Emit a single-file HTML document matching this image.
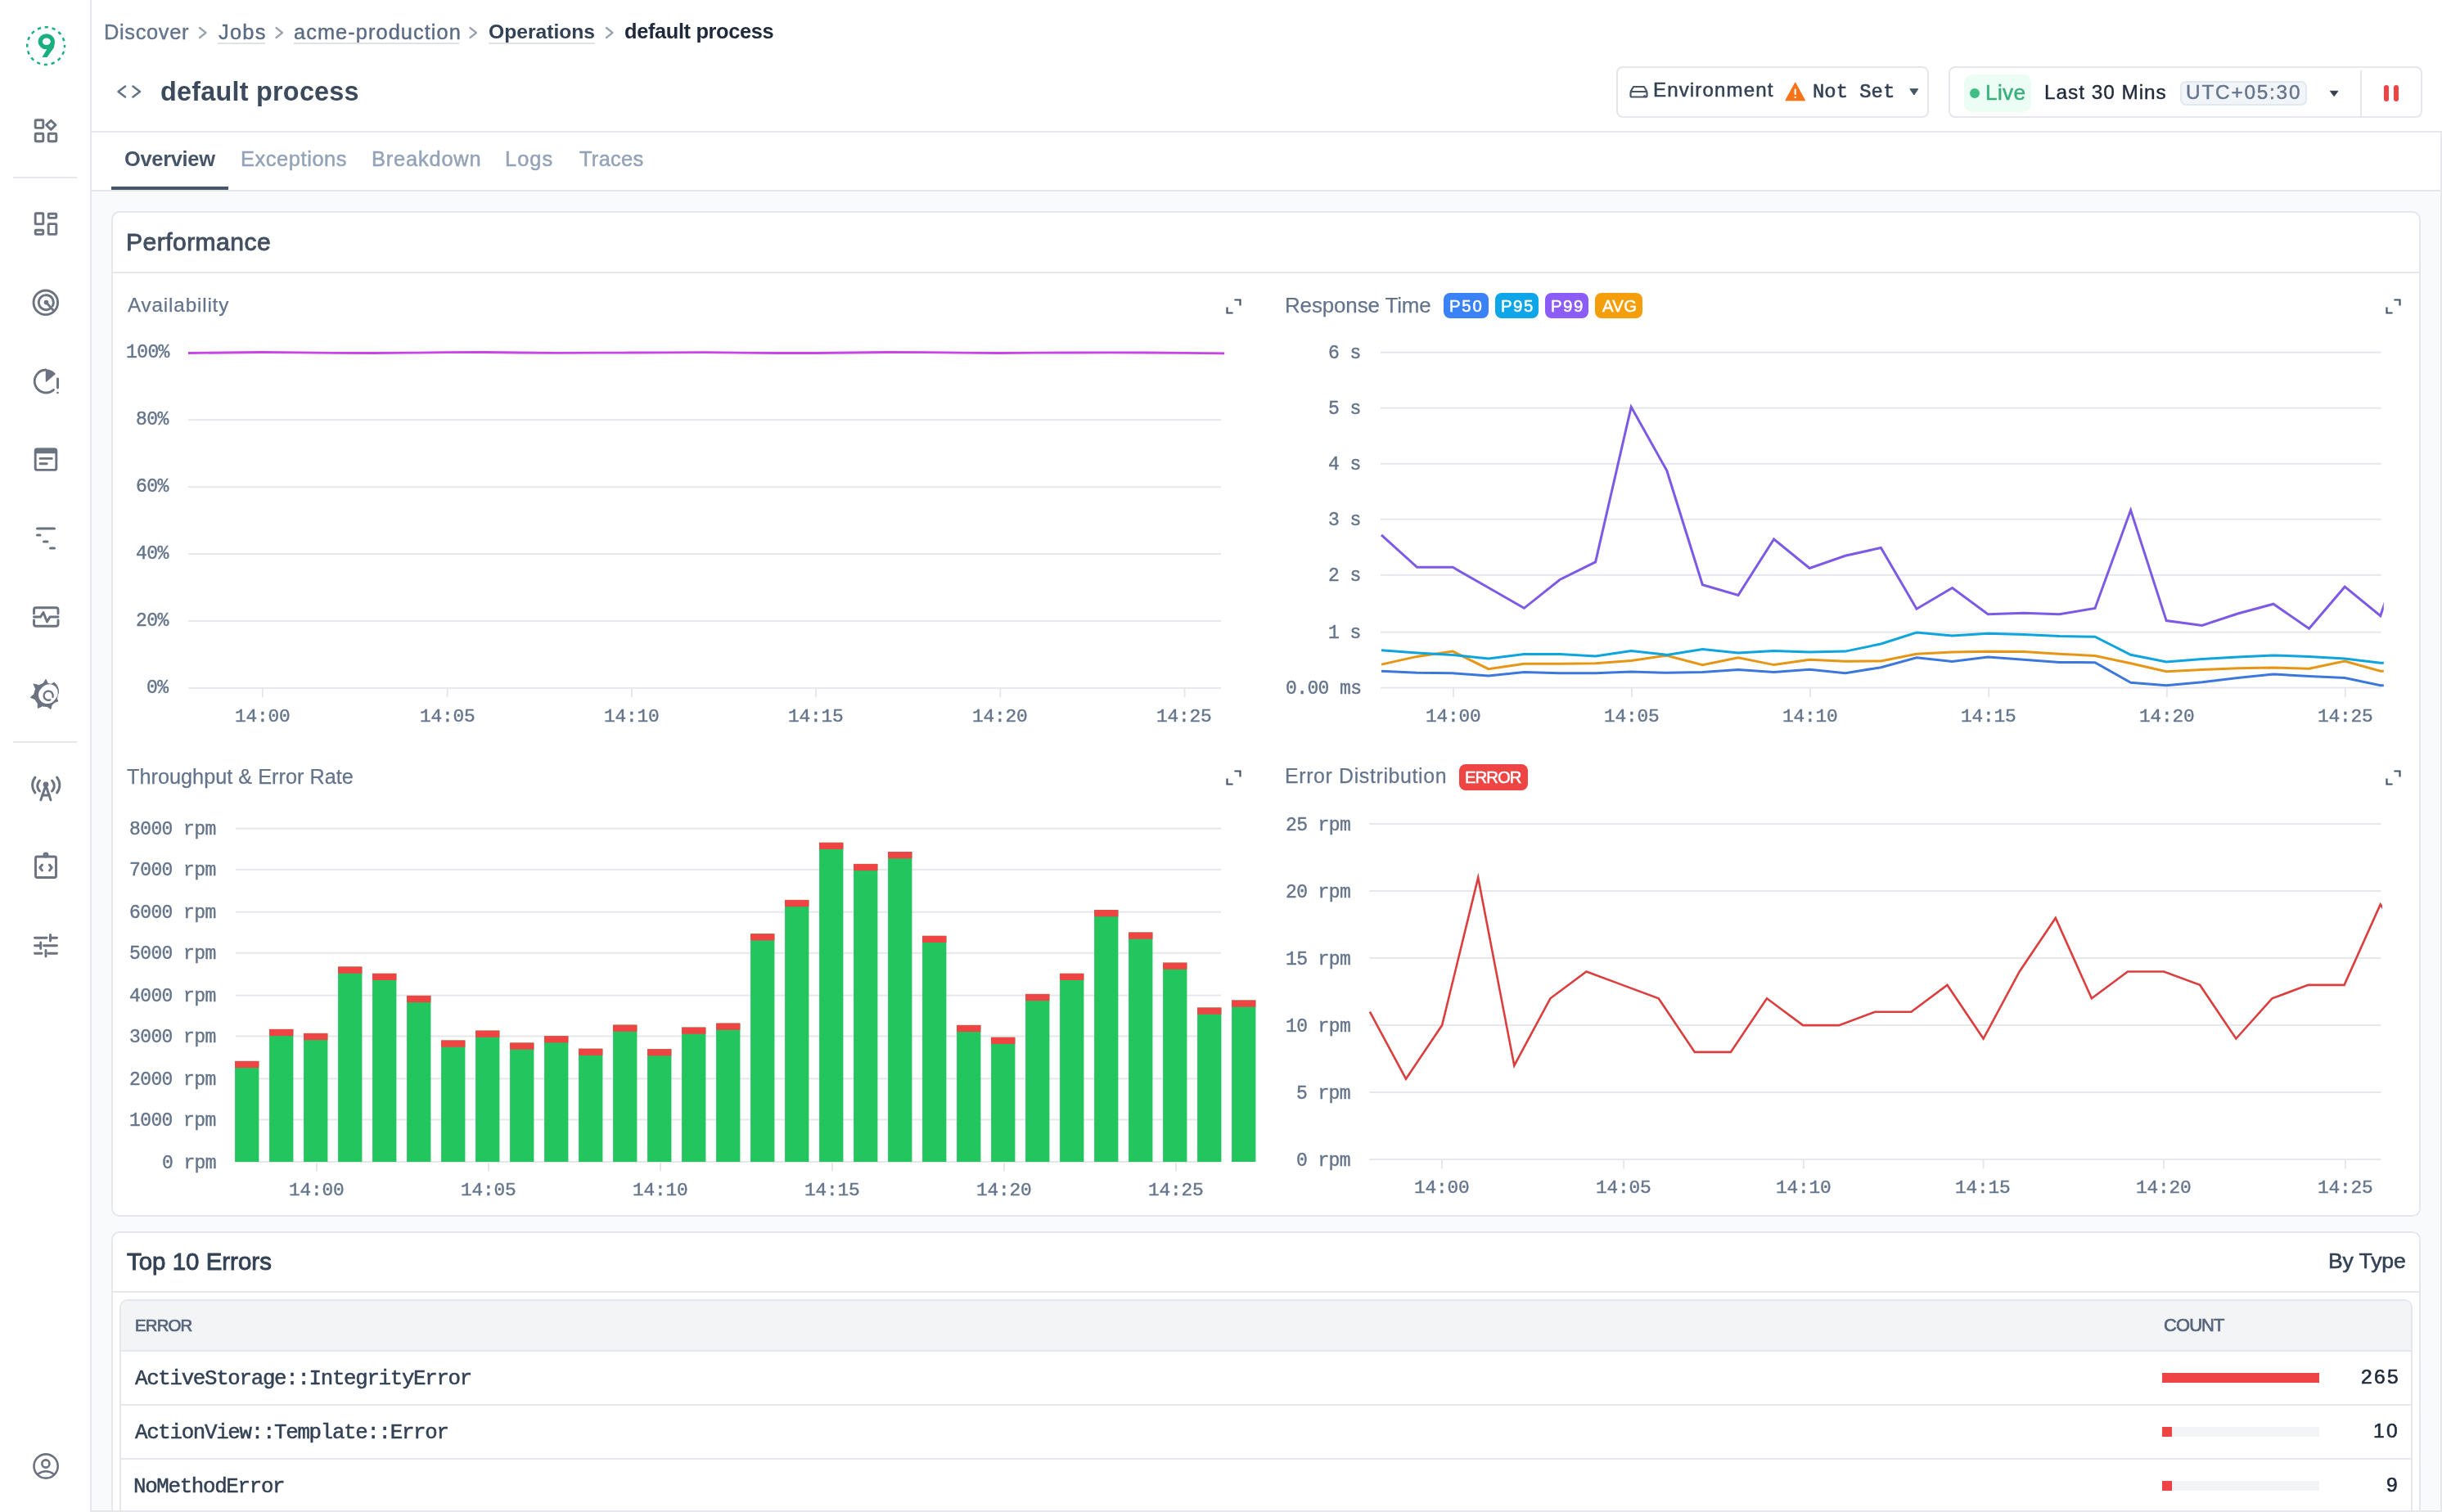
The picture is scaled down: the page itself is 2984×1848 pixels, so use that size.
<!DOCTYPE html>
<html><head><meta charset="utf-8"><title>default process</title>
<style>
*{box-sizing:border-box;margin:0;padding:0}
html,body{width:2984px;height:1848px;overflow:hidden;background:#fff;font-family:"Liberation Sans", sans-serif;}
body{position:relative}
.abs{position:absolute}
.t{position:absolute;white-space:pre;line-height:1;will-change:transform}
#sidebar{position:absolute;left:0;top:0;width:112px;height:1848px;background:#fff;border-right:2px solid #e5e7eb}
#panel{position:absolute;left:112px;top:160px;width:2872px;height:1688px;background:#f8fafc;border-top:2px solid #e5e7eb;border-right:2px solid #e5e7eb}
#tabs{position:absolute;left:112px;top:162px;width:2870px;height:72px;background:#fff;border-bottom:2px solid #e5e7eb}
.card{position:absolute;background:#fff;border:2px solid #e5e7eb;border-radius:10px}
</style></head>
<body>
<div id="sidebar"></div><svg class="abs" style="left:0;top:0" width="112" height="1848" viewBox="0 0 112 1848" fill="none" stroke-linecap="round" stroke-linejoin="round"><circle cx="56.1" cy="56.1" r="22.9" stroke="#1aaf7e" stroke-width="2.5" stroke-dasharray="4.2 4.79" stroke-dashoffset="2.1" stroke-linecap="butt"/><ellipse cx="56.8" cy="50.8" rx="7.6" ry="6.9" stroke="#1aaf7e" stroke-width="5.3"/><path d="M59.5 56.5 L66.8 52.5 L66 58 L57.6 70 L51.4 70 Z" fill="#1aaf7e"/><g stroke="#6b7280" stroke-width="2.9"><rect x="43.2" y="146.8" width="9.6" height="9.6" rx="1"/><rect x="43.2" y="163.2" width="9.6" height="9.6" rx="1"/><rect x="59.2" y="163.2" width="9.6" height="9.6" rx="1"/><path d="M62.3 147.2 L68 152.8 L62.3 158.4 L56.6 152.8 Z"/></g><rect x="16" y="216" width="78" height="2" fill="#e5e7eb"/><g stroke="#6b7280" stroke-width="2.9"><rect x="43.2" y="260.7" width="9.6" height="13.2" rx="1"/><rect x="59.2" y="261.2" width="9.6" height="5.2" rx="1"/><rect x="43.2" y="281.2" width="9.6" height="5.2" rx="1"/><rect x="59.2" y="273.6" width="9.6" height="12.8" rx="1"/></g><g stroke="#6b7280" stroke-width="2.9"><circle cx="55.8" cy="369.8" r="14.8"/><path d="M60.53 377.55 A9 9 0 1 1 64.25 373.83"/><path d="M56.5 369.6 L64.5 378.5"/></g><circle cx="56.5" cy="369.6" r="2.8" fill="#6b7280"/><g stroke="#6b7280" stroke-width="2.9"><path d="M56 452 A14 14 0 1 0 65.5 476.5"/><path d="M70.5 463 L70.5 474"/></g><path d="M56.5 452.2 A13.8 13.8 0 0 1 67 457 L56.5 466 Z" fill="#6b7280" stroke="#6b7280" stroke-width="1.5"/><circle cx="70.5" cy="480" r="1.3" fill="#6b7280"/><g stroke="#6b7280" stroke-width="2.9"><rect x="43.2" y="549" width="25.6" height="25.4" rx="2.5"/><path d="M49 560.4 H63.3 M49 566.7 H57.2"/></g><rect x="42" y="547.8" width="28" height="6.5" rx="2.5" fill="#6b7280"/><g stroke="#6b7280" stroke-width="3"><path d="M45.5 646 H66.5 M45.5 654 H49 M53.5 662 H58 M61.5 670 H66.5"/></g><g stroke="#6b7280" stroke-width="2.9"><path d="M41.5 750 V745 A2.5 2.5 0 0 1 44 742.8 H68.5 A2.5 2.5 0 0 1 71 745 V750"/><path d="M41.5 758 V763 A2.5 2.5 0 0 0 44 765.2 H68.5 A2.5 2.5 0 0 0 71 763 V758"/><path d="M41.5 754 H49.5 L53 748.5 L57.5 760 L61 754 H71"/></g><path d="M41.3 836.0 L47.6 837.7 L53.0 835.3 L56.0 830.4 L58.2 835.2 L62.3 836.4 L66.4 834.2 L69.5 838.0 L71.2 842.2 L71.5 846.9 L70.3 849.4 L69.5 853.9 L70.7 857.1 L67.2 858.2 L63.1 861.7 L62.0 866.5 L57.7 863.5 L51.5 862.9 L46.4 865.5 L46.2 859.7 L42.7 854.6 L37.3 852.4 L41.7 848.4 L43.5 842.3 Z" fill="#6b7280" stroke="#6b7280" stroke-width="1" stroke-linejoin="round"/><circle cx="57.8" cy="849.3" r="10.8" fill="#fff"/><circle cx="60.2" cy="846.8" r="10.6" fill="#fff"/><path d="M61.2 855.4 A5.6 5.6 0 1 1 64.5 851.8" stroke="#6b7280" stroke-width="2.3" fill="none"/><rect x="16" y="906" width="78" height="2" fill="#e5e7eb"/><g stroke="#6b7280" stroke-width="2.9"><path d="M49.8 977.8 L56 960 L62 977.8 M51.5 972 H60.5"/><path d="M48.5 954 A9 9 0 0 0 48.5 967 M63.5 954 A9 9 0 0 1 63.5 967"/><path d="M43 950 A15 15 0 0 0 43 969 M69.5 950 A15 15 0 0 1 69.5 969"/></g><circle cx="56" cy="958.8" r="3.4" fill="#6b7280"/><g stroke="#6b7280" stroke-width="2.9"><rect x="43.5" y="1047" width="25" height="25.5" rx="2"/><circle cx="56" cy="1045" r="2"/><path d="M51.5 1057 L48.7 1060.4 L51.5 1063.8 M60.5 1057 L63.3 1060.4 L60.5 1063.8"/></g><g stroke="#6b7280" stroke-width="2.9"><path d="M42.5 1146.2 H57 M61.5 1146.2 H69.5 M61.5 1142.5 V1150"/><path d="M42.5 1155.8 H49.7 M53.5 1155.8 H69.5 M49.7 1152 V1159.5"/><path d="M42.5 1165.2 H51 M59 1165.2 H69.5 M56 1161.5 V1169"/></g><g stroke="#6b7280" stroke-width="2.6"><circle cx="56.1" cy="1792" r="14.6"/><circle cx="55.9" cy="1789" r="4.6"/><path d="M45.8 1802 Q56 1794.5 66.2 1802"/></g></svg><div class="t" style='left:127.3px;top:26.57px;font-size:25.44px;color:#64748b;font-family:"Liberation Sans", sans-serif;letter-spacing:0.64px;-webkit-text-stroke:0.4px #64748b;'>Discover</div><div class="t" style='left:266.5px;top:26.57px;font-size:25.44px;color:#5b6b84;font-family:"Liberation Sans", sans-serif;letter-spacing:1.23px;-webkit-text-stroke:0.4px #5b6b84;'>Jobs</div><div class="t" style='left:358.5px;top:26.6px;font-size:25.4px;color:#5b6b84;font-family:"Liberation Sans", sans-serif;letter-spacing:1.05px;-webkit-text-stroke:0.4px #5b6b84;'>acme-production</div><div class="t" style='left:596.7px;top:26.68px;font-size:24.71px;color:#334155;font-family:"Liberation Sans", sans-serif;font-weight:700;letter-spacing:-0.04px;'>Operations</div><div class="t" style='left:763px;top:26.1px;font-size:25.4px;color:#1e293b;font-family:"Liberation Sans", sans-serif;font-weight:700;letter-spacing:-0.36px;'>default process</div><div class="abs" style="left:266px;top:52px;width:58px;height:2px;background:#dfe3e8"></div><div class="abs" style="left:359px;top:52px;width:202px;height:2px;background:#dfe3e8"></div><div class="abs" style="left:597px;top:52px;width:130px;height:2px;background:#dfe3e8"></div><svg class="abs" style="left:0;top:0" width="1000" height="60" fill="none" stroke="#9ca3af" stroke-width="2.3" stroke-linecap="round" stroke-linejoin="round"><path d="M244.0 34 L251.5 40 L244.0 46"/><path d="M337.5 34 L345.0 40 L337.5 46"/><path d="M574.5 34 L582.0 40 L574.5 46"/><path d="M741.0 34 L748.5 40 L741.0 46"/></svg><svg class="abs" style="left:130px;top:95px" width="60" height="35" fill="none" stroke="#64748b" stroke-width="2.6" stroke-linecap="round" stroke-linejoin="round"><path d="M23 10.5 L14.5 17 L23 23.5 M32.5 10.5 L41 17 L32.5 23.5"/></svg><div class="t" style='left:196.1px;top:95.57px;font-size:32.4px;color:#3b4a5c;font-family:"Liberation Sans", sans-serif;font-weight:700;letter-spacing:0.23px;'>default process</div><div class="abs" style="left:1975px;top:81px;width:382px;height:63px;border:2px solid #e5e7eb;border-radius:8px;background:#fff"></div><svg class="abs" style="left:1985px;top:95px" width="40" height="35" fill="none" stroke="#475569" stroke-width="2.2" stroke-linejoin="round"><path d="M7.5 17 L11 11 H24 L27.5 17"/><rect x="7.5" y="17" width="20" height="6.5" rx="1.5"/></svg><div class="abs" style="left:2008px;top:115.5px;width:3px;height:3px;border-radius:2px;background:#475569"></div><div class="t" style='left:2020px;top:98.18px;font-size:24.13px;color:#334155;font-family:"Liberation Sans", sans-serif;letter-spacing:1.1px;-webkit-text-stroke:0.5px #334155;'>Environment</div><svg class="abs" style="left:2180px;top:99px" width="28" height="26"><path d="M13.7 2.5 L25.2 23.5 H2.2 Z" fill="#f97316" stroke="#f97316" stroke-width="1.5" stroke-linejoin="round"/><rect x="12.6" y="9.5" width="2.3" height="7.5" rx="1" fill="#fff"/><rect x="12.6" y="18.8" width="2.3" height="2.3" rx="1" fill="#fff"/></svg><div class="t" style='left:2214.8px;top:100.74px;font-size:23.82px;color:#334155;font-family:"Liberation Mono", monospace;letter-spacing:0.03px;-webkit-text-stroke:0.6px #334155;'>Not Set</div><svg class="abs" style="left:2330px;top:104px" width="20" height="16"><path d="M3.9 4.7 H13.8 L8.85 12 Z" fill="#475569" stroke="#475569" stroke-width="1" stroke-linejoin="round"/></svg><div class="abs" style="left:2381px;top:81px;width:579px;height:63px;border:2px solid #e5e7eb;border-radius:8px;background:#fff"></div><div class="abs" style="left:2400px;top:91px;width:82px;height:46px;border-radius:10px;background:#ecfdf5"></div><div class="abs" style="left:2406.7px;top:107.6px;width:12px;height:12px;border-radius:6px;background:#3fbf85"></div><div class="t" style='left:2426px;top:99.85px;font-size:26.16px;color:#3aae7c;font-family:"Liberation Sans", sans-serif;letter-spacing:0.33px;-webkit-text-stroke:0.5px #3aae7c;'>Live</div><div class="t" style='left:2497.5px;top:101.33px;font-size:24.42px;color:#1e293b;font-family:"Liberation Sans", sans-serif;letter-spacing:0.95px;-webkit-text-stroke:0.4px #1e293b;'>Last 30 Mins</div><div class="abs" style="left:2664px;top:99px;width:155px;height:30px;border:2px solid #e2e8f0;border-radius:7px;background:#f1f5f9"></div><div class="t" style='left:2671px;top:101.33px;font-size:24.42px;color:#64748b;font-family:"Liberation Sans", sans-serif;letter-spacing:1.75px;-webkit-text-stroke:0.4px #64748b;'>UTC+05:30</div><svg class="abs" style="left:2840px;top:104px" width="24" height="20"><path d="M7.4 7.3 H16.9 L12.15 13.6 Z" fill="#374151" stroke="#374151" stroke-width="1" stroke-linejoin="round"/></svg><div class="abs" style="left:2884px;top:86px;width:2px;height:57px;background:#e5e7eb"></div><div class="abs" style="left:2913px;top:104px;width:6px;height:20px;border-radius:3px;background:#ef4444"></div><div class="abs" style="left:2925px;top:104px;width:6px;height:20px;border-radius:3px;background:#ef4444"></div><div id="panel"></div><div id="tabs"></div><div class="t" style='left:152px;top:182.47px;font-size:25.44px;color:#475569;font-family:"Liberation Sans", sans-serif;font-weight:700;letter-spacing:-0.31px;'>Overview</div><div class="t" style='left:293.5px;top:182.47px;font-size:25.44px;color:#94a3b8;font-family:"Liberation Sans", sans-serif;letter-spacing:0.57px;-webkit-text-stroke:0.5px #94a3b8;'>Exceptions</div><div class="t" style='left:454px;top:182.47px;font-size:25.44px;color:#94a3b8;font-family:"Liberation Sans", sans-serif;letter-spacing:0.8px;-webkit-text-stroke:0.5px #94a3b8;'>Breakdown</div><div class="t" style='left:617px;top:182.47px;font-size:25.44px;color:#94a3b8;font-family:"Liberation Sans", sans-serif;letter-spacing:1px;-webkit-text-stroke:0.5px #94a3b8;'>Logs</div><div class="t" style='left:707.6px;top:182.47px;font-size:25.44px;color:#94a3b8;font-family:"Liberation Sans", sans-serif;letter-spacing:0.28px;-webkit-text-stroke:0.5px #94a3b8;'>Traces</div><div class="abs" style="left:136px;top:228px;width:143px;height:4px;background:#475569"></div><div class="card" style="left:136px;top:258px;width:2822px;height:1229px"></div><svg class="abs" style="left:0;top:0" width="2984" height="1848"><defs><clipPath id="cA"><rect x="226" y="380" width="1275" height="470"/></clipPath><clipPath id="cR"><rect x="1686" y="380" width="1226.8" height="470"/></clipPath><clipPath id="cE"><rect x="1672" y="960" width="1239" height="470"/></clipPath></defs><rect x="230" y="430.2" width="1262" height="2" fill="#e5e7eb"/><rect x="230" y="512.2" width="1262" height="2" fill="#e5e7eb"/><rect x="230" y="594.2" width="1262" height="2" fill="#e5e7eb"/><rect x="230" y="676" width="1262" height="2" fill="#e5e7eb"/><rect x="230" y="757.9" width="1262" height="2" fill="#e5e7eb"/><rect x="230" y="839.9" width="1262" height="2" fill="#e5e7eb"/><rect x="319.9" y="840.9" width="2" height="11.5" fill="#e5e7eb"/><rect x="545.7" y="840.9" width="2" height="11.5" fill="#e5e7eb"/><rect x="770.9" y="840.9" width="2" height="11.5" fill="#e5e7eb"/><rect x="996.1" y="840.9" width="2" height="11.5" fill="#e5e7eb"/><rect x="1221.3" y="840.9" width="2" height="11.5" fill="#e5e7eb"/><rect x="1446.5" y="840.9" width="2" height="11.5" fill="#e5e7eb"/><polyline points="230,431.5 275.04,431 320.08,430.5 365.12,430.8 410.16,431.3 455.2,431.5 500.24,431.2 545.28,430.7 590.32,430.5 635.36,431 680.4,431.3 725.44,431.2 770.48,431 815.52,430.8 860.56,430.7 905.6,431.2 950.64,431.5 995.68,431.5 1040.72,431 1085.76,430.5 1130.8,430.7 1175.84,431.2 1220.88,431.5 1265.92,431.2 1310.96,431 1356,430.8 1401.04,431 1446.08,431.3 1491.12,431.8 1496,432" fill="none" stroke="#c844e3" stroke-width="2.8" stroke-linejoin="miter" stroke-miterlimit="10"/><rect x="1687" y="429.7" width="1222.5" height="2" fill="#e5e7eb"/><rect x="1687" y="497.7" width="1222.5" height="2" fill="#e5e7eb"/><rect x="1687" y="565.8" width="1222.5" height="2" fill="#e5e7eb"/><rect x="1687" y="633.7" width="1222.5" height="2" fill="#e5e7eb"/><rect x="1687" y="701.8" width="1222.5" height="2" fill="#e5e7eb"/><rect x="1687" y="771.7" width="1222.5" height="2" fill="#e5e7eb"/><rect x="1687" y="839.6" width="1222.5" height="2" fill="#e5e7eb"/><rect x="1775" y="840.6" width="2" height="11.5" fill="#e5e7eb"/><rect x="1993" y="840.6" width="2" height="11.5" fill="#e5e7eb"/><rect x="2211" y="840.6" width="2" height="11.5" fill="#e5e7eb"/><rect x="2429.2" y="840.6" width="2" height="11.5" fill="#e5e7eb"/><rect x="2646.9" y="840.6" width="2" height="11.5" fill="#e5e7eb"/><rect x="2864.8" y="840.6" width="2" height="11.5" fill="#e5e7eb"/><polyline points="1688,820.2 1731.6,822.3 1775.2,822.8 1818.8,826.1 1862.4,821.5 1906,822.8 1949.6,822.8 1993.2,821 2036.8,822.3 2080.4,821.5 2124,818.4 2167.6,821.5 2211.2,818.2 2254.8,822.8 2298.4,815.7 2342,803.7 2385.6,808.4 2429.2,802.9 2472.8,806.3 2516.4,809.4 2560,809.7 2603.6,834.3 2647.2,837.7 2690.8,833.8 2734.4,828.6 2778,824.1 2821.6,826.5 2865.2,828.6 2908.8,837.7 2952.4,839" fill="none" stroke="#3c78dc" stroke-width="3" stroke-linejoin="miter" stroke-miterlimit="10" clip-path="url(#cR)"/><polyline points="1688,812.1 1731.6,802.4 1775.2,796.1 1818.8,817.7 1862.4,811.3 1906,811.3 1949.6,810.8 1993.2,807.5 2036.8,801.2 2080.4,812.6 2124,803.7 2167.6,812.6 2211.2,806.3 2254.8,808.3 2298.4,808 2342,799.2 2385.6,797.1 2429.2,796.3 2472.8,796.6 2516.4,799.2 2560,801.6 2603.6,810.7 2647.2,820.7 2690.8,818.6 2734.4,816.8 2778,816 2821.6,817.3 2865.2,808.1 2908.8,820.2 2952.4,822" fill="none" stroke="#e69614" stroke-width="3" stroke-linejoin="miter" stroke-miterlimit="10" clip-path="url(#cR)"/><polyline points="1688,794.8 1731.6,797.9 1775.2,800.4 1818.8,805 1862.4,799.4 1906,799.4 1949.6,801.9 1993.2,795.6 2036.8,800.4 2080.4,793.6 2124,797.9 2167.6,795.6 2211.2,796.9 2254.8,796.1 2298.4,787 2342,773 2385.6,776.9 2429.2,774.3 2472.8,775.6 2516.4,777.5 2560,778.2 2603.6,800.3 2647.2,808.9 2690.8,805.5 2734.4,802.9 2778,801 2821.6,802.4 2865.2,805 2908.8,810.2 2952.4,812" fill="none" stroke="#0ea5de" stroke-width="3" stroke-linejoin="miter" stroke-miterlimit="10" clip-path="url(#cR)"/><polyline points="1688,653.9 1731.6,693.3 1775.2,693.3 1818.8,718.2 1862.4,743.3 1906,708.5 1949.6,686.9 1993.2,497.3 2036.8,575.2 2080.4,714.8 2124,727.5 2167.6,659 2211.2,694.5 2254.8,679.3 2298.4,669.5 2342,744.2 2385.6,718.5 2429.2,750.7 2472.8,749.2 2516.4,750.7 2560,743.4 2603.6,623.6 2647.2,758.6 2690.8,764.4 2734.4,750 2778,738.2 2821.6,768.3 2865.2,717.2 2908.8,752.6 2952.4,623" fill="none" stroke="#7d5ae6" stroke-width="3" stroke-linejoin="miter" stroke-miterlimit="10" clip-path="url(#cR)"/><rect x="288" y="1011.7" width="1204" height="2" fill="#e5e7eb"/><rect x="288" y="1061.8" width="1204" height="2" fill="#e5e7eb"/><rect x="288" y="1113.7" width="1204" height="2" fill="#e5e7eb"/><rect x="288" y="1163.8" width="1204" height="2" fill="#e5e7eb"/><rect x="288" y="1215.6" width="1204" height="2" fill="#e5e7eb"/><rect x="288" y="1265.5" width="1204" height="2" fill="#e5e7eb"/><rect x="288" y="1317.4" width="1204" height="2" fill="#e5e7eb"/><rect x="288" y="1367.4" width="1204" height="2" fill="#e5e7eb"/><rect x="288" y="1419" width="1204" height="2" fill="#e5e7eb"/><rect x="287.1" y="1296.9" width="29.3" height="123.1" fill="#22c55e"/><rect x="287.1" y="1296.9" width="29.3" height="8.2" fill="#ef4444"/><rect x="329.1" y="1257.9" width="29.3" height="162.1" fill="#22c55e"/><rect x="329.1" y="1257.9" width="29.3" height="8.2" fill="#ef4444"/><rect x="371.1" y="1262.9" width="29.3" height="157.1" fill="#22c55e"/><rect x="371.1" y="1262.9" width="29.3" height="8.2" fill="#ef4444"/><rect x="413.1" y="1181.5" width="29.3" height="238.5" fill="#22c55e"/><rect x="413.1" y="1181.5" width="29.3" height="8.2" fill="#ef4444"/><rect x="455.1" y="1189.8" width="29.3" height="230.2" fill="#22c55e"/><rect x="455.1" y="1189.8" width="29.3" height="8.2" fill="#ef4444"/><rect x="497.1" y="1216.9" width="29.3" height="203.1" fill="#22c55e"/><rect x="497.1" y="1216.9" width="29.3" height="8.2" fill="#ef4444"/><rect x="539.1" y="1271.5" width="29.3" height="148.5" fill="#22c55e"/><rect x="539.1" y="1271.5" width="29.3" height="8.2" fill="#ef4444"/><rect x="581.1" y="1259.6" width="29.3" height="160.4" fill="#22c55e"/><rect x="581.1" y="1259.6" width="29.3" height="8.2" fill="#ef4444"/><rect x="623.1" y="1274.5" width="29.3" height="145.5" fill="#22c55e"/><rect x="623.1" y="1274.5" width="29.3" height="8.2" fill="#ef4444"/><rect x="665.1" y="1266.2" width="29.3" height="153.8" fill="#22c55e"/><rect x="665.1" y="1266.2" width="29.3" height="8.2" fill="#ef4444"/><rect x="707.1" y="1281.7" width="29.3" height="138.3" fill="#22c55e"/><rect x="707.1" y="1281.7" width="29.3" height="8.2" fill="#ef4444"/><rect x="749.1" y="1252.6" width="29.3" height="167.4" fill="#22c55e"/><rect x="749.1" y="1252.6" width="29.3" height="8.2" fill="#ef4444"/><rect x="791.1" y="1282.2" width="29.3" height="137.8" fill="#22c55e"/><rect x="791.1" y="1282.2" width="29.3" height="8.2" fill="#ef4444"/><rect x="833.1" y="1255.6" width="29.3" height="164.4" fill="#22c55e"/><rect x="833.1" y="1255.6" width="29.3" height="8.2" fill="#ef4444"/><rect x="875.1" y="1250.6" width="29.3" height="169.4" fill="#22c55e"/><rect x="875.1" y="1250.6" width="29.3" height="8.2" fill="#ef4444"/><rect x="917.1" y="1141.2" width="29.3" height="278.8" fill="#22c55e"/><rect x="917.1" y="1141.2" width="29.3" height="8.2" fill="#ef4444"/><rect x="959.1" y="1099.9" width="29.3" height="320.1" fill="#22c55e"/><rect x="959.1" y="1099.9" width="29.3" height="8.2" fill="#ef4444"/><rect x="1001.1" y="1029.8" width="29.3" height="390.2" fill="#22c55e"/><rect x="1001.1" y="1029.8" width="29.3" height="8.2" fill="#ef4444"/><rect x="1043.1" y="1055.9" width="29.3" height="364.1" fill="#22c55e"/><rect x="1043.1" y="1055.9" width="29.3" height="8.2" fill="#ef4444"/><rect x="1085.1" y="1041" width="29.3" height="379" fill="#22c55e"/><rect x="1085.1" y="1041" width="29.3" height="8.2" fill="#ef4444"/><rect x="1127.1" y="1143.8" width="29.3" height="276.2" fill="#22c55e"/><rect x="1127.1" y="1143.8" width="29.3" height="8.2" fill="#ef4444"/><rect x="1169.1" y="1252.9" width="29.3" height="167.1" fill="#22c55e"/><rect x="1169.1" y="1252.9" width="29.3" height="8.2" fill="#ef4444"/><rect x="1211.1" y="1267.8" width="29.3" height="152.2" fill="#22c55e"/><rect x="1211.1" y="1267.8" width="29.3" height="8.2" fill="#ef4444"/><rect x="1253.1" y="1214.9" width="29.3" height="205.1" fill="#22c55e"/><rect x="1253.1" y="1214.9" width="29.3" height="8.2" fill="#ef4444"/><rect x="1295.1" y="1189.8" width="29.3" height="230.2" fill="#22c55e"/><rect x="1295.1" y="1189.8" width="29.3" height="8.2" fill="#ef4444"/><rect x="1337.1" y="1112.1" width="29.3" height="307.9" fill="#22c55e"/><rect x="1337.1" y="1112.1" width="29.3" height="8.2" fill="#ef4444"/><rect x="1379.1" y="1139.5" width="29.3" height="280.5" fill="#22c55e"/><rect x="1379.1" y="1139.5" width="29.3" height="8.2" fill="#ef4444"/><rect x="1421.1" y="1176.6" width="29.3" height="243.4" fill="#22c55e"/><rect x="1421.1" y="1176.6" width="29.3" height="8.2" fill="#ef4444"/><rect x="1463.1" y="1231.5" width="29.3" height="188.5" fill="#22c55e"/><rect x="1463.1" y="1231.5" width="29.3" height="8.2" fill="#ef4444"/><rect x="1505.1" y="1222.5" width="29.3" height="197.5" fill="#22c55e"/><rect x="1505.1" y="1222.5" width="29.3" height="8.2" fill="#ef4444"/><rect x="386" y="1420" width="2" height="11.5" fill="#e5e7eb"/><rect x="596" y="1420" width="2" height="11.5" fill="#e5e7eb"/><rect x="806" y="1420" width="2" height="11.5" fill="#e5e7eb"/><rect x="1016" y="1420" width="2" height="11.5" fill="#e5e7eb"/><rect x="1226" y="1420" width="2" height="11.5" fill="#e5e7eb"/><rect x="1436" y="1420" width="2" height="11.5" fill="#e5e7eb"/><rect x="1673.5" y="1005.9" width="1235.8" height="2" fill="#e5e7eb"/><rect x="1673.5" y="1087.9" width="1235.8" height="2" fill="#e5e7eb"/><rect x="1673.5" y="1169.9" width="1235.8" height="2" fill="#e5e7eb"/><rect x="1673.5" y="1251.9" width="1235.8" height="2" fill="#e5e7eb"/><rect x="1673.5" y="1334" width="1235.8" height="2" fill="#e5e7eb"/><rect x="1673.5" y="1416.1" width="1235.8" height="2" fill="#e5e7eb"/><rect x="1761.1" y="1417.1" width="2" height="11.5" fill="#e5e7eb"/><rect x="1983.1" y="1417.1" width="2" height="11.5" fill="#e5e7eb"/><rect x="2202.8" y="1417.1" width="2" height="11.5" fill="#e5e7eb"/><rect x="2422.6" y="1417.1" width="2" height="11.5" fill="#e5e7eb"/><rect x="2642.9" y="1417.1" width="2" height="11.5" fill="#e5e7eb"/><rect x="2864.9" y="1417.1" width="2" height="11.5" fill="#e5e7eb"/><polyline points="1673.9,1236.7 1718,1318.7 1762.1,1253.1 1806.2,1072.7 1850.3,1302.3 1894.4,1220.3 1938.5,1187.5 1982.6,1203.9 2026.7,1220.3 2070.8,1285.9 2114.9,1285.9 2159,1220.3 2203.1,1253.1 2247.2,1253.1 2291.3,1236.7 2335.4,1236.7 2379.5,1203.9 2423.6,1269.5 2467.7,1187.5 2511.8,1121.9 2555.9,1220.3 2600,1187.5 2644.1,1187.5 2688.2,1203.9 2732.3,1269.5 2776.4,1220.3 2820.5,1203.9 2864.6,1203.9 2908.7,1105.5 2952.8,1171.1" fill="none" stroke="#dc3e3e" stroke-width="2.6" stroke-linejoin="miter" stroke-miterlimit="10" clip-path="url(#cE)"/></svg><div class="t" style='left:153.5px;top:280.73px;font-size:30.09px;color:#434f60;font-family:"Liberation Sans", sans-serif;letter-spacing:0.45px;-webkit-text-stroke:0.9px #434f60;'>Performance</div><div class="abs" style="left:138px;top:332px;width:2818px;height:2px;background:#e5e7eb"></div><div class="t" style='left:155.5px;top:361.45px;font-size:24.27px;color:#64748b;font-family:"Liberation Sans", sans-serif;letter-spacing:0.83px;-webkit-text-stroke:0.25px #64748b;'>Availability</div><svg class="abs" style="left:1497.5px;top:364.7px" width="20" height="20" fill="none" stroke="#475569" stroke-width="2.2" stroke-linecap="square"><path d="M11.5 1.5 H17.5 V7.5 M1.5 11.5 V17.5 H7.5"/></svg><div class="t" style='left:1570.3px;top:360.5px;font-size:25.87px;color:#64748b;font-family:"Liberation Sans", sans-serif;letter-spacing:-0.08px;-webkit-text-stroke:0.25px #64748b;'>Response Time</div><div class="abs" style="left:1764px;top:358.4px;width:54.6px;height:31.1px;border-radius:8px;background:#3b82f6"></div><div class="t" style='left:1771px;top:363.57px;font-size:20.35px;color:#fff;font-family:"Liberation Sans", sans-serif;letter-spacing:1.75px;-webkit-text-stroke:0.5px #fff;'>P50</div><div class="abs" style="left:1827.2px;top:358.4px;width:52.6px;height:31.1px;border-radius:8px;background:#0ea5e9"></div><div class="t" style='left:1833.5px;top:363.57px;font-size:20.35px;color:#fff;font-family:"Liberation Sans", sans-serif;letter-spacing:1.5px;-webkit-text-stroke:0.5px #fff;'>P95</div><div class="abs" style="left:1888px;top:358.4px;width:52.8px;height:31.1px;border-radius:8px;background:#8b5cf6"></div><div class="t" style='left:1894.5px;top:363.57px;font-size:20.35px;color:#fff;font-family:"Liberation Sans", sans-serif;letter-spacing:1.5px;-webkit-text-stroke:0.5px #fff;'>P99</div><div class="abs" style="left:1949.4px;top:358.4px;width:57.6px;height:31.1px;border-radius:8px;background:#f59e0b"></div><div class="t" style='left:1958px;top:363.57px;font-size:20.35px;color:#fff;font-family:"Liberation Sans", sans-serif;letter-spacing:0.25px;-webkit-text-stroke:0.5px #fff;'>AVG</div><svg class="abs" style="left:2915px;top:364.7px" width="20" height="20" fill="none" stroke="#475569" stroke-width="2.2" stroke-linecap="square"><path d="M11.5 1.5 H17.5 V7.5 M1.5 11.5 V17.5 H7.5"/></svg><div class="t" style='left:155.4px;top:936.69px;font-size:25.29px;color:#64748b;font-family:"Liberation Sans", sans-serif;-webkit-text-stroke:0.25px #64748b;'>Throughput &amp; Error Rate</div><svg class="abs" style="left:1497.5px;top:940.7px" width="20" height="20" fill="none" stroke="#475569" stroke-width="2.2" stroke-linecap="square"><path d="M11.5 1.5 H17.5 V7.5 M1.5 11.5 V17.5 H7.5"/></svg><div class="t" style='left:1570.3px;top:936.96px;font-size:24.85px;color:#64748b;font-family:"Liberation Sans", sans-serif;letter-spacing:0.66px;-webkit-text-stroke:0.25px #64748b;'>Error Distribution</div><div class="abs" style="left:1783.3px;top:934.4px;width:83.3px;height:31.2px;border-radius:8px;background:#ef4444"></div><div class="t" style='left:1790px;top:939.57px;font-size:20.35px;color:#fff;font-family:"Liberation Sans", sans-serif;letter-spacing:-1px;-webkit-text-stroke:0.5px #fff;'>ERROR</div><svg class="abs" style="left:2915px;top:940.7px" width="20" height="20" fill="none" stroke="#475569" stroke-width="2.2" stroke-linecap="square"><path d="M11.5 1.5 H17.5 V7.5 M1.5 11.5 V17.5 H7.5"/></svg><div class="t" style='left:153.5px;top:420.37px;font-size:23px;color:#64748b;font-family:"Liberation Mono", monospace;letter-spacing:-0.6px;-webkit-text-stroke:0.4px #64748b;'>100%</div><div class="t" style='left:165.9px;top:502.37px;font-size:23px;color:#64748b;font-family:"Liberation Mono", monospace;letter-spacing:-0.6px;-webkit-text-stroke:0.4px #64748b;'>80%</div><div class="t" style='left:165.9px;top:584.37px;font-size:23px;color:#64748b;font-family:"Liberation Mono", monospace;letter-spacing:-0.6px;-webkit-text-stroke:0.4px #64748b;'>60%</div><div class="t" style='left:165.9px;top:666.17px;font-size:23px;color:#64748b;font-family:"Liberation Mono", monospace;letter-spacing:-0.6px;-webkit-text-stroke:0.4px #64748b;'>40%</div><div class="t" style='left:165.9px;top:748.07px;font-size:23px;color:#64748b;font-family:"Liberation Mono", monospace;letter-spacing:-0.6px;-webkit-text-stroke:0.4px #64748b;'>20%</div><div class="t" style='left:179.3px;top:830.07px;font-size:23px;color:#64748b;font-family:"Liberation Mono", monospace;letter-spacing:-0.6px;-webkit-text-stroke:0.4px #64748b;'>0%</div><div class="t" style='left:286.7px;top:864.52px;font-size:22.8px;color:#64748b;font-family:"Liberation Mono", monospace;letter-spacing:-0.15px;-webkit-text-stroke:0.4px #64748b;'>14:00</div><div class="t" style='left:512.5px;top:864.52px;font-size:22.8px;color:#64748b;font-family:"Liberation Mono", monospace;letter-spacing:-0.15px;-webkit-text-stroke:0.4px #64748b;'>14:05</div><div class="t" style='left:737.7px;top:864.52px;font-size:22.8px;color:#64748b;font-family:"Liberation Mono", monospace;letter-spacing:-0.15px;-webkit-text-stroke:0.4px #64748b;'>14:10</div><div class="t" style='left:962.9px;top:864.52px;font-size:22.8px;color:#64748b;font-family:"Liberation Mono", monospace;letter-spacing:-0.15px;-webkit-text-stroke:0.4px #64748b;'>14:15</div><div class="t" style='left:1188.1px;top:864.52px;font-size:22.8px;color:#64748b;font-family:"Liberation Mono", monospace;letter-spacing:-0.15px;-webkit-text-stroke:0.4px #64748b;'>14:20</div><div class="t" style='left:1413.3px;top:864.52px;font-size:22.8px;color:#64748b;font-family:"Liberation Mono", monospace;letter-spacing:-0.15px;-webkit-text-stroke:0.4px #64748b;'>14:25</div><div class="t" style='left:1570.6px;top:831.27px;font-size:23px;color:#64748b;font-family:"Liberation Mono", monospace;letter-spacing:-0.6px;-webkit-text-stroke:0.4px #64748b;'>0.00 ms</div><div class="t" style='left:1623.2px;top:763.37px;font-size:23px;color:#64748b;font-family:"Liberation Mono", monospace;letter-spacing:-0.6px;-webkit-text-stroke:0.4px #64748b;'>1 s</div><div class="t" style='left:1623.2px;top:693.47px;font-size:23px;color:#64748b;font-family:"Liberation Mono", monospace;letter-spacing:-0.6px;-webkit-text-stroke:0.4px #64748b;'>2 s</div><div class="t" style='left:1623.2px;top:625.37px;font-size:23px;color:#64748b;font-family:"Liberation Mono", monospace;letter-spacing:-0.6px;-webkit-text-stroke:0.4px #64748b;'>3 s</div><div class="t" style='left:1623.2px;top:557.47px;font-size:23px;color:#64748b;font-family:"Liberation Mono", monospace;letter-spacing:-0.6px;-webkit-text-stroke:0.4px #64748b;'>4 s</div><div class="t" style='left:1623.2px;top:489.37px;font-size:23px;color:#64748b;font-family:"Liberation Mono", monospace;letter-spacing:-0.6px;-webkit-text-stroke:0.4px #64748b;'>5 s</div><div class="t" style='left:1623.2px;top:421.37px;font-size:23px;color:#64748b;font-family:"Liberation Mono", monospace;letter-spacing:-0.6px;-webkit-text-stroke:0.4px #64748b;'>6 s</div><div class="t" style='left:1741.8px;top:864.52px;font-size:22.8px;color:#64748b;font-family:"Liberation Mono", monospace;letter-spacing:-0.15px;-webkit-text-stroke:0.4px #64748b;'>14:00</div><div class="t" style='left:1959.8px;top:864.52px;font-size:22.8px;color:#64748b;font-family:"Liberation Mono", monospace;letter-spacing:-0.15px;-webkit-text-stroke:0.4px #64748b;'>14:05</div><div class="t" style='left:2177.8px;top:864.52px;font-size:22.8px;color:#64748b;font-family:"Liberation Mono", monospace;letter-spacing:-0.15px;-webkit-text-stroke:0.4px #64748b;'>14:10</div><div class="t" style='left:2396px;top:864.52px;font-size:22.8px;color:#64748b;font-family:"Liberation Mono", monospace;letter-spacing:-0.15px;-webkit-text-stroke:0.4px #64748b;'>14:15</div><div class="t" style='left:2613.7px;top:864.52px;font-size:22.8px;color:#64748b;font-family:"Liberation Mono", monospace;letter-spacing:-0.15px;-webkit-text-stroke:0.4px #64748b;'>14:20</div><div class="t" style='left:2831.6px;top:864.52px;font-size:22.8px;color:#64748b;font-family:"Liberation Mono", monospace;letter-spacing:-0.15px;-webkit-text-stroke:0.4px #64748b;'>14:25</div><div class="t" style='left:157.7px;top:1003.37px;font-size:23px;color:#64748b;font-family:"Liberation Mono", monospace;letter-spacing:-0.6px;-webkit-text-stroke:0.4px #64748b;'>8000 rpm</div><div class="t" style='left:157.7px;top:1053.47px;font-size:23px;color:#64748b;font-family:"Liberation Mono", monospace;letter-spacing:-0.6px;-webkit-text-stroke:0.4px #64748b;'>7000 rpm</div><div class="t" style='left:157.7px;top:1105.37px;font-size:23px;color:#64748b;font-family:"Liberation Mono", monospace;letter-spacing:-0.6px;-webkit-text-stroke:0.4px #64748b;'>6000 rpm</div><div class="t" style='left:157.7px;top:1155.47px;font-size:23px;color:#64748b;font-family:"Liberation Mono", monospace;letter-spacing:-0.6px;-webkit-text-stroke:0.4px #64748b;'>5000 rpm</div><div class="t" style='left:157.7px;top:1207.27px;font-size:23px;color:#64748b;font-family:"Liberation Mono", monospace;letter-spacing:-0.6px;-webkit-text-stroke:0.4px #64748b;'>4000 rpm</div><div class="t" style='left:157.7px;top:1257.17px;font-size:23px;color:#64748b;font-family:"Liberation Mono", monospace;letter-spacing:-0.6px;-webkit-text-stroke:0.4px #64748b;'>3000 rpm</div><div class="t" style='left:157.7px;top:1309.07px;font-size:23px;color:#64748b;font-family:"Liberation Mono", monospace;letter-spacing:-0.6px;-webkit-text-stroke:0.4px #64748b;'>2000 rpm</div><div class="t" style='left:157.7px;top:1359.07px;font-size:23px;color:#64748b;font-family:"Liberation Mono", monospace;letter-spacing:-0.6px;-webkit-text-stroke:0.4px #64748b;'>1000 rpm</div><div class="t" style='left:197.9px;top:1410.67px;font-size:23px;color:#64748b;font-family:"Liberation Mono", monospace;letter-spacing:-0.6px;-webkit-text-stroke:0.4px #64748b;'>0 rpm</div><div class="t" style='left:352.8px;top:1443.82px;font-size:22.8px;color:#64748b;font-family:"Liberation Mono", monospace;letter-spacing:-0.15px;-webkit-text-stroke:0.4px #64748b;'>14:00</div><div class="t" style='left:562.8px;top:1443.82px;font-size:22.8px;color:#64748b;font-family:"Liberation Mono", monospace;letter-spacing:-0.15px;-webkit-text-stroke:0.4px #64748b;'>14:05</div><div class="t" style='left:772.8px;top:1443.82px;font-size:22.8px;color:#64748b;font-family:"Liberation Mono", monospace;letter-spacing:-0.15px;-webkit-text-stroke:0.4px #64748b;'>14:10</div><div class="t" style='left:982.8px;top:1443.82px;font-size:22.8px;color:#64748b;font-family:"Liberation Mono", monospace;letter-spacing:-0.15px;-webkit-text-stroke:0.4px #64748b;'>14:15</div><div class="t" style='left:1192.8px;top:1443.82px;font-size:22.8px;color:#64748b;font-family:"Liberation Mono", monospace;letter-spacing:-0.15px;-webkit-text-stroke:0.4px #64748b;'>14:20</div><div class="t" style='left:1402.8px;top:1443.82px;font-size:22.8px;color:#64748b;font-family:"Liberation Mono", monospace;letter-spacing:-0.15px;-webkit-text-stroke:0.4px #64748b;'>14:25</div><div class="t" style='left:1570.9px;top:997.57px;font-size:23px;color:#64748b;font-family:"Liberation Mono", monospace;letter-spacing:-0.6px;-webkit-text-stroke:0.4px #64748b;'>25 rpm</div><div class="t" style='left:1570.9px;top:1079.57px;font-size:23px;color:#64748b;font-family:"Liberation Mono", monospace;letter-spacing:-0.6px;-webkit-text-stroke:0.4px #64748b;'>20 rpm</div><div class="t" style='left:1570.9px;top:1161.57px;font-size:23px;color:#64748b;font-family:"Liberation Mono", monospace;letter-spacing:-0.6px;-webkit-text-stroke:0.4px #64748b;'>15 rpm</div><div class="t" style='left:1570.9px;top:1243.57px;font-size:23px;color:#64748b;font-family:"Liberation Mono", monospace;letter-spacing:-0.6px;-webkit-text-stroke:0.4px #64748b;'>10 rpm</div><div class="t" style='left:1584.3px;top:1325.67px;font-size:23px;color:#64748b;font-family:"Liberation Mono", monospace;letter-spacing:-0.6px;-webkit-text-stroke:0.4px #64748b;'>5 rpm</div><div class="t" style='left:1584.3px;top:1407.77px;font-size:23px;color:#64748b;font-family:"Liberation Mono", monospace;letter-spacing:-0.6px;-webkit-text-stroke:0.4px #64748b;'>0 rpm</div><div class="t" style='left:1727.9px;top:1440.52px;font-size:22.8px;color:#64748b;font-family:"Liberation Mono", monospace;letter-spacing:-0.15px;-webkit-text-stroke:0.4px #64748b;'>14:00</div><div class="t" style='left:1949.9px;top:1440.52px;font-size:22.8px;color:#64748b;font-family:"Liberation Mono", monospace;letter-spacing:-0.15px;-webkit-text-stroke:0.4px #64748b;'>14:05</div><div class="t" style='left:2169.6px;top:1440.52px;font-size:22.8px;color:#64748b;font-family:"Liberation Mono", monospace;letter-spacing:-0.15px;-webkit-text-stroke:0.4px #64748b;'>14:10</div><div class="t" style='left:2389.4px;top:1440.52px;font-size:22.8px;color:#64748b;font-family:"Liberation Mono", monospace;letter-spacing:-0.15px;-webkit-text-stroke:0.4px #64748b;'>14:15</div><div class="t" style='left:2609.7px;top:1440.52px;font-size:22.8px;color:#64748b;font-family:"Liberation Mono", monospace;letter-spacing:-0.15px;-webkit-text-stroke:0.4px #64748b;'>14:20</div><div class="t" style='left:2831.7px;top:1440.52px;font-size:22.8px;color:#64748b;font-family:"Liberation Mono", monospace;letter-spacing:-0.15px;-webkit-text-stroke:0.4px #64748b;'>14:25</div><div class="card" style="left:136px;top:1504.5px;width:2822px;height:420px"></div><div class="t" style='left:154.75px;top:1527.08px;font-size:29.43px;color:#334155;font-family:"Liberation Sans", sans-serif;letter-spacing:0.02px;-webkit-text-stroke:0.9px #334155;'>Top 10 Errors</div><div class="t" style='left:2844.8px;top:1528.08px;font-size:26.6px;color:#334155;font-family:"Liberation Sans", sans-serif;letter-spacing:-0.13px;-webkit-text-stroke:0.6px #334155;'>By Type</div><div class="abs" style="left:138px;top:1577.5px;width:2818px;height:2px;background:#e5e7eb"></div><div class="abs" style="left:146px;top:1588px;width:2802px;height:400px;border:2px solid #e5e7eb;border-radius:10px;background:#fff;overflow:hidden"><div style="position:absolute;left:0;top:0;right:0;height:62px;background:#f3f4f6;border-bottom:2px solid #e5e7eb"></div><div style="position:absolute;left:0;top:126px;right:0;height:2px;background:#e5e7eb"></div><div style="position:absolute;left:0;top:192px;right:0;height:2px;background:#e5e7eb"></div></div><div class="t" style='left:165px;top:1609.77px;font-size:20.35px;color:#56657c;font-family:"Liberation Sans", sans-serif;letter-spacing:-0.81px;-webkit-text-stroke:0.7px #56657c;'>ERROR</div><div class="t" style='left:2643.7px;top:1608.72px;font-size:21.95px;color:#56657c;font-family:"Liberation Sans", sans-serif;letter-spacing:-0.88px;-webkit-text-stroke:0.7px #56657c;'>COUNT</div><div class="t" style='left:164.5px;top:1673.23px;font-size:25.8px;color:#334155;font-family:"Liberation Mono", monospace;letter-spacing:-1.31px;-webkit-text-stroke:0.5px #334155;'>ActiveStorage::IntegrityError</div><div class="abs" style="left:2642px;top:1678.4px;width:192px;height:11.5px;background:#f3f4f6"></div><div class="abs" style="left:2642px;top:1678.4px;width:192px;height:11.5px;background:#ef4444"></div><div class="t" style='left:2884.5px;top:1671.01px;font-size:24.56px;color:#1e293b;font-family:"Liberation Sans", sans-serif;letter-spacing:2.4px;-webkit-text-stroke:0.6px #1e293b;'>265</div><div class="t" style='left:164.5px;top:1739.23px;font-size:25.8px;color:#334155;font-family:"Liberation Mono", monospace;letter-spacing:-1.31px;-webkit-text-stroke:0.5px #334155;'>ActionView::Template::Error</div><div class="abs" style="left:2642px;top:1744.1px;width:192px;height:11.5px;background:#f3f4f6"></div><div class="abs" style="left:2642px;top:1744.1px;width:12px;height:11.5px;background:#ef4444"></div><div class="t" style='left:2899.9px;top:1737.01px;font-size:24.56px;color:#1e293b;font-family:"Liberation Sans", sans-serif;letter-spacing:2.4px;-webkit-text-stroke:0.6px #1e293b;'>10</div><div class="t" style='left:162.5px;top:1804.98px;font-size:25.8px;color:#334155;font-family:"Liberation Mono", monospace;letter-spacing:-1.31px;-webkit-text-stroke:0.5px #334155;'>NoMethodError</div><div class="abs" style="left:2642px;top:1810.3px;width:192px;height:11.5px;background:#f3f4f6"></div><div class="abs" style="left:2642px;top:1810.3px;width:12px;height:11.5px;background:#ef4444"></div><div class="t" style='left:2916.3px;top:1802.76px;font-size:24.56px;color:#1e293b;font-family:"Liberation Sans", sans-serif;letter-spacing:2.4px;-webkit-text-stroke:0.6px #1e293b;'>9</div><div class="abs" style="left:112px;top:1846px;width:2872px;height:2px;background:#e5e7eb"></div>
</body></html>
